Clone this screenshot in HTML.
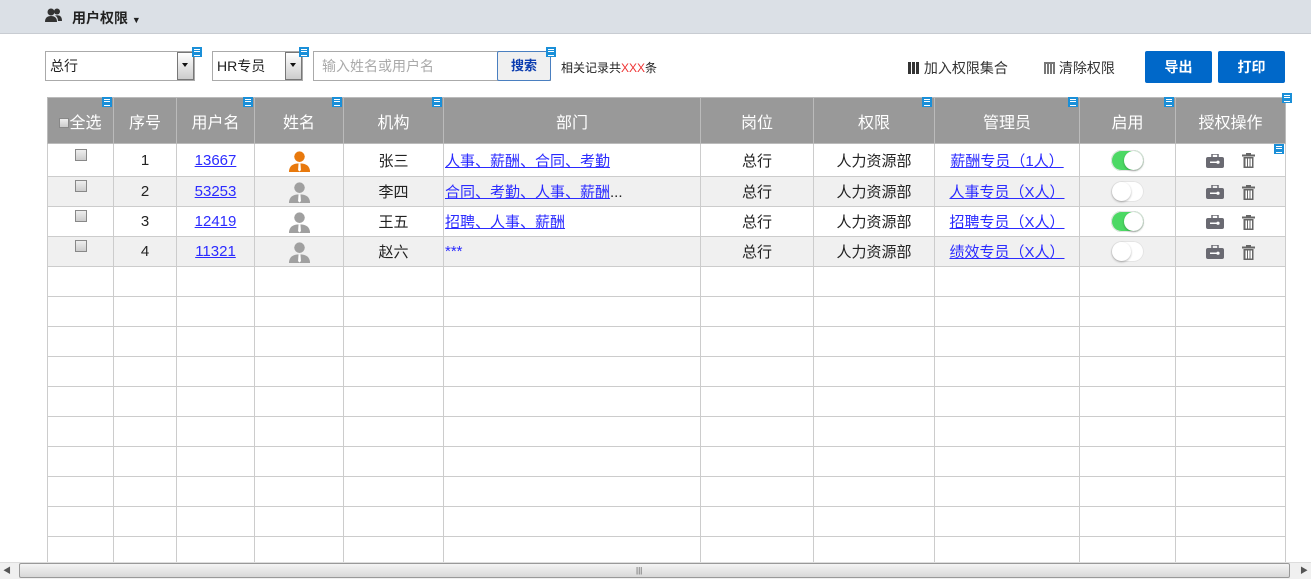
<!DOCTYPE html>
<html><head><meta charset="utf-8"><style>
*{box-sizing:border-box;margin:0;padding:0}
body{width:1311px;height:579px;overflow:hidden;background:#fff;font-family:"Liberation Sans","Noto Sans CJK SC",sans-serif;position:relative;font-size:14px;color:#222}
.top{position:absolute;left:0;top:0;width:1311px;height:34px;background:#dbe0e6;border-bottom:1px solid #c8ccd2}
.top .t{position:absolute;left:72px;top:8px;font-size:14px;font-weight:bold;color:#222}
.ab{position:absolute}
.sel{position:absolute;height:30px;border:1px solid #aaa;background:#fff;font-size:14px;line-height:28px;padding-left:4px}
.sel .arr{position:absolute;right:0;top:0;width:17px;height:28px;border:1px solid #777;background:linear-gradient(#fff,#ccc)}
.sel .arr:after{content:"";position:absolute;left:4px;top:10px;border:3px solid transparent;border-top:4px solid #111}
.mi{position:absolute;width:10px;height:10px;background:#1a8fd8}
.mi:after{content:"";position:absolute;left:2px;top:2px;width:6px;height:5px;border-top:1px solid #fff;border-bottom:1px solid #fff}
.mi:before{content:"";position:absolute;left:2px;top:4px;width:6px;height:1px;background:#fff}
.btn{position:absolute;top:51px;width:67px;height:32px;background:#0068c9;color:#fff;font-weight:bold;font-size:14px;text-align:center;line-height:32px;border-radius:2px}
table{position:absolute;left:47px;top:97px;border-collapse:collapse;table-layout:fixed}
td,th{border:1px solid #ccc;text-align:center;font-size:15px;height:30px;padding:0;white-space:nowrap;overflow:hidden}
th{background:#999;color:#fff;font-weight:normal;height:46px;border-color:#bbb;font-size:16px}
tr.g td{background:#f0f0f0}
a{color:#2b2bff;text-decoration:underline}
.cb{display:inline-block;width:12px;height:12px;border:1px solid #888;background:linear-gradient(#eee,#ccc)}
td .cb{position:relative;top:-4px}
.sw{display:inline-block;width:33px;height:21px;border-radius:11px;position:relative;vertical-align:middle;background:#fff;box-shadow:inset 0 0 0 1px #e4e4e4}
.sw.on{background:#4cd964}
.sw i{position:absolute;top:1px;width:19px;height:19px;border-radius:50%;background:#fff;box-shadow:0 1px 2px rgba(0,0,0,.3)}
.sw.on i{right:1px}.sw.off i{left:1px}
.dep{text-align:left;padding-left:1px}
</style></head><body>
<div class="top">
<svg class="ab" style="left:45px;top:8px" width="18" height="15" viewBox="0 0 18 15"><circle cx="6" cy="4" r="3.5" fill="#333"/><path d="M0 14 Q0 8 6 8 Q12 8 12 14Z" fill="#333"/><circle cx="12" cy="3.5" r="3" fill="#333"/><path d="M10 7.5 Q17 6 17 13 L13 13 Q13 9 10 7.5Z" fill="#333"/></svg>
<div class="t">用户权限 <span style="font-size:9px">▼</span></div>
</div>
<div class="sel" style="left:45px;top:51px;width:150px">总行<div class="arr"></div></div>
<div class="mi" style="left:192px;top:47px"></div>
<div class="sel" style="left:212px;top:51px;width:91px">HR专员<div class="arr"></div></div>
<div class="mi" style="left:299px;top:47px"></div>
<div class="ab" style="left:313px;top:51px;width:238px;height:30px;border:1px solid #aaa;font-size:14px;line-height:28px;padding-left:8px;color:#aaa">输入姓名或用户名</div>
<div class="ab" style="left:497px;top:51px;width:54px;height:30px;border:1px solid #4a7fc0;background:#f0f0f0;border-radius:2px;text-align:center;line-height:28px;font-weight:bold;color:#0c3db0;font-size:13px">搜索</div>
<div class="mi" style="left:546px;top:47px"></div>
<div class="ab" style="left:561px;top:59px;font-size:12px;color:#222">相关记录共<span style="color:#e33">XXX</span>条</div>
<div class="ab" style="left:908px;top:58px;font-size:14px;color:#333"><span style="display:inline-block;width:12px;height:12px;background:repeating-linear-gradient(90deg,#333 0 3px,#fff 3px 4px);vertical-align:-1px"></span> 加入权限集合</div>
<div class="ab" style="left:1044px;top:58px;font-size:14px;color:#333"><span style="display:inline-block;width:11px;height:12px;background:repeating-linear-gradient(90deg,#777 0 2px,#fff 2px 3px);border-top:2px solid #777;vertical-align:-1px"></span> 清除权限</div>
<div class="btn" style="left:1145px">导出</div>
<div class="btn" style="left:1218px">打印</div>
<table>
<colgroup><col style="width:66px"><col style="width:63px"><col style="width:78px"><col style="width:89px"><col style="width:100px"><col style="width:257px"><col style="width:113px"><col style="width:121px"><col style="width:145px"><col style="width:96px"><col style="width:110px"></colgroup>
<tr><th><span class="cb" style="width:10px;height:10px;vertical-align:0"></span>全选</th><th>序号</th><th>用户名</th><th>姓名</th><th>机构</th><th>部门</th><th>岗位</th><th>权限</th><th>管理员</th><th>启用</th><th>授权操作</th></tr>
<tr style="height:33px"><td><span class="cb"></span></td><td>1</td><td><a>13667</a></td><td>ICO1</td><td>张三</td><td class="dep"><a>人事、薪酬、合同、考勤</a></td><td>总行</td><td>人力资源部</td><td><a>薪酬专员（1人）</a></td><td><span class="sw on"><i></i></span></td><td>OPS</td></tr>
<tr class="g"><td><span class="cb"></span></td><td>2</td><td><a>53253</a></td><td>ICO2</td><td>李四</td><td class="dep"><a>合同、考勤、人事、薪酬</a>...</td><td>总行</td><td>人力资源部</td><td><a>人事专员（X人）</a></td><td><span class="sw off"><i></i></span></td><td>OPS</td></tr>
<tr><td><span class="cb"></span></td><td>3</td><td><a>12419</a></td><td>ICO2</td><td>王五</td><td class="dep"><a>招聘、人事、薪酬</a></td><td>总行</td><td>人力资源部</td><td><a>招聘专员（X人）</a></td><td><span class="sw on"><i></i></span></td><td>OPS</td></tr>
<tr class="g"><td><span class="cb"></span></td><td>4</td><td><a>11321</a></td><td>ICO2</td><td>赵六</td><td class="dep"><a style="text-decoration:none">***</a></td><td>总行</td><td>人力资源部</td><td><a>绩效专员（X人）</a></td><td><span class="sw off"><i></i></span></td><td>OPS</td></tr>
<tr><td></td><td></td><td></td><td></td><td></td><td></td><td></td><td></td><td></td><td></td><td></td></tr>
<tr><td></td><td></td><td></td><td></td><td></td><td></td><td></td><td></td><td></td><td></td><td></td></tr>
<tr><td></td><td></td><td></td><td></td><td></td><td></td><td></td><td></td><td></td><td></td><td></td></tr>
<tr><td></td><td></td><td></td><td></td><td></td><td></td><td></td><td></td><td></td><td></td><td></td></tr>
<tr><td></td><td></td><td></td><td></td><td></td><td></td><td></td><td></td><td></td><td></td><td></td></tr>
<tr><td></td><td></td><td></td><td></td><td></td><td></td><td></td><td></td><td></td><td></td><td></td></tr>
<tr><td></td><td></td><td></td><td></td><td></td><td></td><td></td><td></td><td></td><td></td><td></td></tr>
<tr><td></td><td></td><td></td><td></td><td></td><td></td><td></td><td></td><td></td><td></td><td></td></tr>
<tr><td></td><td></td><td></td><td></td><td></td><td></td><td></td><td></td><td></td><td></td><td></td></tr>
<tr><td></td><td></td><td></td><td></td><td></td><td></td><td></td><td></td><td></td><td></td><td></td></tr>
</table>
<div class="mi" style="left:102px;top:97px"></div>
<div class="mi" style="left:243px;top:97px"></div>
<div class="mi" style="left:332px;top:97px"></div>
<div class="mi" style="left:432px;top:97px"></div>
<div class="mi" style="left:922px;top:97px"></div>
<div class="mi" style="left:1068px;top:97px"></div>
<div class="mi" style="left:1164px;top:97px"></div>
<div class="mi" style="left:1282px;top:93px"></div>
<div class="mi" style="left:1274px;top:144px"></div>
<div class="ab" style="left:0;top:562px;width:1311px;height:17px;background:#f0f0f0;border-top:1px solid #ddd"></div>
<div class="ab" style="left:19px;top:563px;width:1271px;height:15px;border:1px solid #999;border-radius:2px;background:linear-gradient(#f4f4f4,#d8d8d8)"></div>
<div class="ab" style="left:636px;top:566px;font-size:8px;color:#555">|||</div>
<div class="ab" style="left:3px;top:565px;font-size:8px;color:#555">◀</div>
<div class="ab" style="left:1300px;top:565px;font-size:8px;color:#555">▶</div>
<script>
var p='<svg width="23" height="23" viewBox="0 0 24 24" style="vertical-align:middle"><circle cx="12" cy="8" r="5.5" fill="C"/><path d="M1 24 Q1 15 12 15 Q23 15 23 24Z" fill="C"/><path d="M11 15 L13 15 L13.5 22 L12 23.5 L10.5 22Z" fill="#fff"/></svg>';
var ops='<svg width="18" height="14" viewBox="0 0 18 14" style="vertical-align:middle;margin-right:18px"><rect x="0" y="3" width="18" height="11" rx="2" fill="#6a6a72"/><rect x="6" y="0" width="6" height="4" fill="none" stroke="#6a6a72" stroke-width="1.5"/><rect x="4" y="7.5" width="8" height="1.5" fill="#fff"/><circle cx="12" cy="8.2" r="1.6" fill="#fff"/></svg><svg width="13" height="15" viewBox="0 0 13 15" style="vertical-align:middle"><rect x="0" y="1.5" width="13" height="2" fill="#666"/><rect x="4" y="0" width="5" height="2" fill="#666"/><path d="M1.5 4h10v11h-10z" fill="#666"/><rect x="3.5" y="5.5" width="1.5" height="8" fill="#fff"/><rect x="6" y="5.5" width="1.5" height="8" fill="#fff"/><rect x="8.5" y="5.5" width="1.5" height="8" fill="#fff"/></svg>';
document.querySelectorAll('td').forEach(function(t){if(t.textContent=='ICO1')t.innerHTML=p.replace(/C/g,'#e8790d');else if(t.textContent=='ICO2')t.innerHTML=p.replace(/C/g,'#a0a0a0');else if(t.textContent=='OPS')t.innerHTML=ops;});
</script>
</body></html>
